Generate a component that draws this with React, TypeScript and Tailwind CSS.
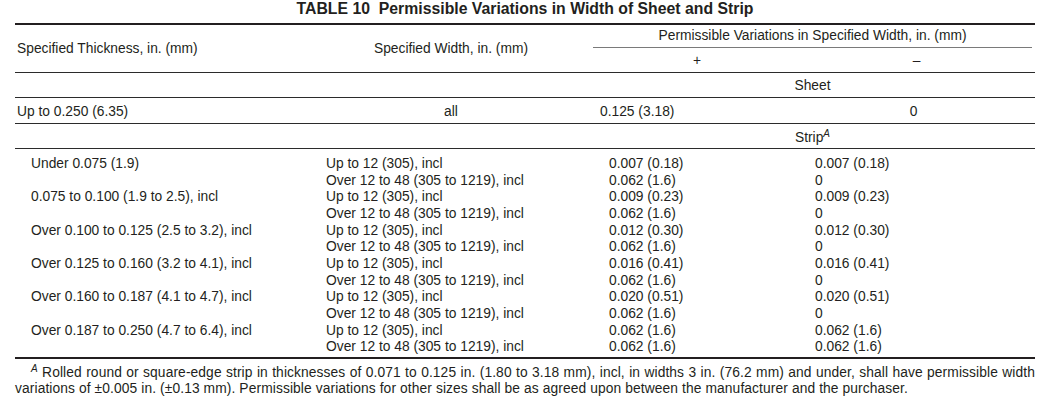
import React from 'react';

const rows = [
  { thick: 'Under 0.075 (1.9)', plus: ['0.007 (0.18)', '0.062 (1.6)'], minus: ['0.007 (0.18)', '0'] },
  { thick: '0.075 to 0.100 (1.9 to 2.5), incl', plus: ['0.009 (0.23)', '0.062 (1.6)'], minus: ['0.009 (0.23)', '0'] },
  { thick: 'Over 0.100 to 0.125 (2.5 to 3.2), incl', plus: ['0.012 (0.30)', '0.062 (1.6)'], minus: ['0.012 (0.30)', '0'] },
  { thick: 'Over 0.125 to 0.160 (3.2 to 4.1), incl', plus: ['0.016 (0.41)', '0.062 (1.6)'], minus: ['0.016 (0.41)', '0'] },
  { thick: 'Over 0.160 to 0.187 (4.1 to 4.7), incl', plus: ['0.020 (0.51)', '0.062 (1.6)'], minus: ['0.020 (0.51)', '0'] },
  { thick: 'Over 0.187 to 0.250 (4.7 to 6.4), incl', plus: ['0.062 (1.6)', '0.062 (1.6)'], minus: ['0.062 (1.6)', '0.062 (1.6)'] },
];

const widths = ['Up to 12 (305), incl', 'Over 12 to 48 (305 to 1219), incl'];

const cols = 'grid grid-cols-[296px_282px_208px_231px]';

const Sup = () => <sup className="italic text-[10px] relative -top-[5px]">A</sup>;

export default function App() {
  return (
    <div className="w-[1050px] h-[412px] bg-white text-[#231f20] text-[13.8px] font-['Liberation_Sans',Arial,sans-serif]">
      <div className="h-[23px] text-center font-bold text-[15.8px] leading-[17px]">
        TABLE 10&nbsp;&nbsp;Permissible Variations in Width of Sheet and Strip
      </div>

      <div className="mx-[15px] border-t-2 border-[#231f20]">
        {/* header */}
        <div className={`${cols} h-[48px] border-b border-[#2b2b2b]`}>
          <div className="flex items-center pl-[2px] pt-[2px]">Specified Thickness, in. (mm)</div>
          <div className="flex items-center justify-center pr-[2px] pt-[2px]">Specified Width, in. (mm)</div>
          <div className="col-span-2 flex flex-col">
            <div className="h-[23px] flex items-center justify-center border-b border-[#7a7a7a] pt-[1px]">
              Permissible Variations in Specified Width, in. (mm)
            </div>
            <div className="grid grid-cols-[208px_231px] flex-1">
              <div className="flex items-center justify-center pt-[2px]">+</div>
              <div className="flex items-center justify-center pt-[2px]">–</div>
            </div>
          </div>
        </div>

        {/* sheet */}
        <div className={`${cols} h-[25px] border-b border-[#2b2b2b]`}>
          <div />
          <div />
          <div className="col-span-2 flex items-center justify-center pt-[3px]">Sheet</div>
        </div>
        <div className={`${cols} h-[26px] border-b border-[#2b2b2b]`}>
          <div className="flex items-center pl-[2px] pt-[3px]">Up to 0.250 (6.35)</div>
          <div className="flex items-center justify-center pr-[2px] pt-[3px]">all</div>
          <div className="flex items-center pl-[7px] pt-[3px]">0.125 (3.18)</div>
          <div className="flex items-center justify-center pr-[6px] pt-[3px]">0</div>
        </div>

        {/* strip */}
        <div className={`${cols} h-[25px] border-b border-[#2b2b2b]`}>
          <div />
          <div />
          <div className="col-span-2 flex items-center justify-center pt-[4px]">
            <span>
              Strip
              <Sup />
            </span>
          </div>
        </div>
        <div className="pt-[7px] pb-[1px] leading-[16.67px] border-b-2 border-[#231f20]">
          {rows.map((r) => (
            <div key={r.thick} className={cols}>
              <div className="pl-[16px]">{r.thick}</div>
              <div className="pl-[15px]">
                {widths.map((w) => (
                  <div key={w}>{w}</div>
                ))}
              </div>
              <div className="pl-[16px]">
                {r.plus.map((v, i) => (
                  <div key={i}>{v}</div>
                ))}
              </div>
              <div className="pl-[14px]">
                {r.minus.map((v, i) => (
                  <div key={i}>{v}</div>
                ))}
              </div>
            </div>
          ))}
        </div>

        {/* footnote */}
        <div className="pt-[6px] leading-[16px] tracking-[0.1px]">
          <div className="pl-[16px] text-justify [text-align-last:justify]">
            <Sup /> Rolled round or square-edge strip in thicknesses of 0.071 to 0.125 in. (1.80 to 3.18 mm), incl, in widths 3 in. (76.2 mm) and under, shall have permissible width
          </div>
          <div>
            variations of ±0.005 in. (±0.13 mm). Permissible variations for other sizes shall be as agreed upon between the manufacturer and the purchaser.
          </div>
        </div>
      </div>
    </div>
  );
}
